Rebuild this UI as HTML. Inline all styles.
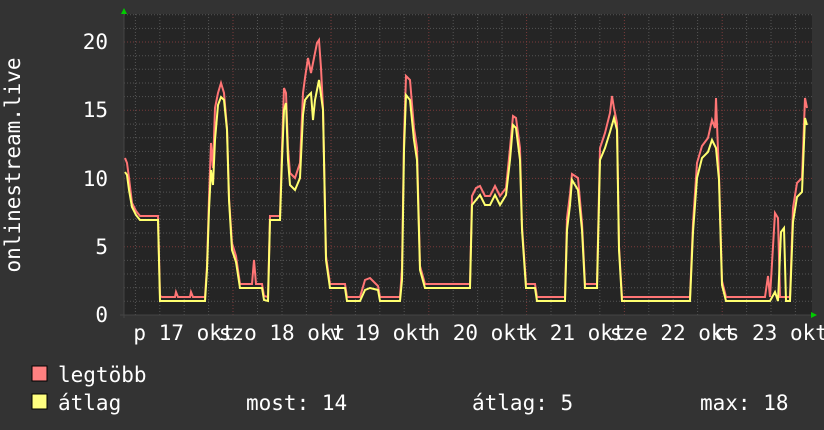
<!DOCTYPE html>
<html><head><meta charset="utf-8"><style>
html,body{margin:0;padding:0;background:#333;}
svg{display:block;}
text{font-family:"DejaVu Sans Mono","Liberation Mono",monospace;fill:#fff;font-size:21px;}
</style></head><body>
<svg width="824" height="430" viewBox="0 0 824 430" xmlns="http://www.w3.org/2000/svg">
<rect width="824" height="430" fill="#333"/>
<rect x="124" y="14" width="688" height="301" fill="#252525"/>
<g stroke="#555" stroke-width="1" stroke-dasharray="1,2">
<line x1="124" x2="812" y1="301.3" y2="301.3"/><line x1="124" x2="812" y1="287.7" y2="287.7"/><line x1="124" x2="812" y1="274" y2="274"/><line x1="124" x2="812" y1="260.4" y2="260.4"/>
<line x1="124" x2="812" y1="233" y2="233"/><line x1="124" x2="812" y1="219.4" y2="219.4"/><line x1="124" x2="812" y1="205.7" y2="205.7"/><line x1="124" x2="812" y1="192.1" y2="192.1"/>
<line x1="124" x2="812" y1="165" y2="165"/><line x1="124" x2="812" y1="151.4" y2="151.4"/><line x1="124" x2="812" y1="137.7" y2="137.7"/><line x1="124" x2="812" y1="124.1" y2="124.1"/>
<line x1="124" x2="812" y1="96.6" y2="96.6"/><line x1="124" x2="812" y1="83" y2="83"/><line x1="124" x2="812" y1="69.3" y2="69.3"/><line x1="124" x2="812" y1="55.7" y2="55.7"/>
<line x1="124" x2="812" y1="28.4" y2="28.4"/><line x1="124" x2="812" y1="14.7" y2="14.7"/>
<line y1="14" y2="315" x1="159.8" x2="159.8"/><line y1="14" y2="315" x1="184.2" x2="184.2"/><line y1="14" y2="315" x1="208.6" x2="208.6"/>
<line y1="14" y2="315" x1="257.5" x2="257.5"/><line y1="14" y2="315" x1="282" x2="282"/><line y1="14" y2="315" x1="306.4" x2="306.4"/>
<line y1="14" y2="315" x1="355.4" x2="355.4"/><line y1="14" y2="315" x1="379.8" x2="379.8"/><line y1="14" y2="315" x1="404.2" x2="404.2"/>
<line y1="14" y2="315" x1="453.2" x2="453.2"/><line y1="14" y2="315" x1="477.6" x2="477.6"/><line y1="14" y2="315" x1="502" x2="502"/>
<line y1="14" y2="315" x1="551" x2="551"/><line y1="14" y2="315" x1="575.4" x2="575.4"/><line y1="14" y2="315" x1="599.8" x2="599.8"/>
<line y1="14" y2="315" x1="648.8" x2="648.8"/><line y1="14" y2="315" x1="673.2" x2="673.2"/><line y1="14" y2="315" x1="697.6" x2="697.6"/>
<line y1="14" y2="315" x1="746.6" x2="746.6"/><line y1="14" y2="315" x1="771" x2="771"/><line y1="14" y2="315" x1="795.4" x2="795.4"/>
<line y1="14" y2="315" x1="135.4" x2="135.4"/>
</g>
<g stroke="#7a3a3a" stroke-width="1" stroke-dasharray="1,2">
<line x1="124" x2="812" y1="246.7" y2="246.7"/><line x1="124" x2="812" y1="178.4" y2="178.4"/><line x1="124" x2="812" y1="110.2" y2="110.2"/><line x1="124" x2="812" y1="42" y2="42"/>
<line y1="14" y2="315" x1="233" x2="233"/><line y1="14" y2="315" x1="331" x2="331"/><line y1="14" y2="315" x1="428.8" x2="428.8"/><line y1="14" y2="315" x1="526.6" x2="526.6"/><line y1="14" y2="315" x1="624.4" x2="624.4"/><line y1="14" y2="315" x1="722.2" x2="722.2"/>
</g>
<line x1="120" x2="814" y1="315" y2="315" stroke="#444" stroke-width="1"/>
<line x1="124" x2="124" y1="12" y2="318" stroke="#444" stroke-width="1"/>
<polygon points="121,14 127,14 124,8" fill="#0c0"/>
<polygon points="811,312 811,318 817,315" fill="#0c0"/>

<g fill="none" stroke-width="2" stroke-linejoin="miter">
<polyline stroke="#ff7575" transform="translate(0,-2)" points="125,160 127,165 129,180 132,205 136,213 140,218 155,218 158,218 160,298 162,299 175,299 176,294 178,299 190,299 191,294 193,299 205,299 207,268 209,200 211,145 213,170 215,110 218,95 221,85 224,95 227,130 229,200 232,245 236,258 240,286 252,286 254,262 256,286 262,286 264,298 268,299 270,218 280,218 282,150 284,90 286,95 288,150 290,175 295,180 300,165 303,95 305,80 308,60 311,75 313,65 315,55 317,45 319,42 321,70 323,110 326,258 330,286 345,286 347,299 360,299 365,282 370,280 378,288 380,299 400,299 402,270 404,140 406,78 410,82 414,130 417,150 420,268 425,286 470,286 472,198 476,190 480,188 485,198 490,198 495,188 500,198 506,190 510,150 513,118 516,120 520,150 522,228 526,286 535,286 537,299 565,299 567,220 570,196 572,176 578,180 582,225 585,286 597,286 600,150 605,135 610,115 612,98 614,110 617,125 619,248 622,299 690,299 693,225 697,165 702,148 708,140 712,122 715,130 716,100 719,178 722,283 726,299 765,299 768,278 770,299 775,215 778,220 780,299 786,299 790,299 793,210 797,185 802,180 805,100 807,110"/>
<polyline stroke="#ffff70" points="125,172 127,175 129,190 132,207 136,215 140,220 155,220 158,220 160,301 162,301 205,301 207,270 209,210 211,170 213,185 215,140 218,105 221,97 224,100 227,130 229,200 232,250 236,262 240,288 262,288 264,300 268,301 270,220 280,220 282,160 284,110 286,103 288,160 290,185 295,190 300,178 303,115 305,100 308,96 311,93 313,120 315,100 317,90 319,80 321,95 323,110 326,260 330,288 345,288 347,301 360,301 365,290 370,288 378,290 380,301 400,301 402,280 404,150 406,95 410,100 414,140 417,160 420,270 425,288 470,288 472,205 476,200 480,195 485,205 490,205 495,195 500,205 506,195 510,160 513,125 516,128 520,160 522,230 526,288 535,288 537,301 565,301 567,230 570,205 572,180 578,190 582,230 585,288 597,288 600,160 605,148 610,132 614,118 617,130 619,250 622,301 690,301 693,232 697,178 702,158 708,152 712,140 716,148 719,180 722,285 726,301 770,301 775,292 778,301 781,232 784,228 786,301 790,301 793,222 797,197 802,192 805,118 807,125"/>
</g>

<g text-anchor="end">
<text x="108" y="49">20</text>
<text x="108" y="117">15</text>
<text x="108" y="186">10</text>
<text x="108" y="254">5</text>
<text x="108" y="322">0</text>
</g>
<text transform="translate(20,165) rotate(-90)" text-anchor="middle">onlinestream.live</text>
<g text-anchor="middle">
<text x="184" y="340">p 17 okt</text>
<text x="282" y="340">szo 18 okt</text>
<text x="380" y="340">v 19 okt</text>
<text x="478" y="340">h 20 okt</text>
<text x="575" y="340">k 21 okt</text>
<text x="673" y="340">sze 22 okt</text>
<text x="771" y="340">cs 23 okt</text>
</g>
<rect x="32" y="366" width="15" height="15" fill="#ff8080" stroke="#000" stroke-width="1"/>
<rect x="32" y="394" width="15" height="15" fill="#ffff80" stroke="#000" stroke-width="1"/>
<text x="58" y="382">legtöbb</text>
<text x="58" y="410">átlag</text>
<text x="246" y="410">most: 14</text>
<text x="472" y="410">átlag: 5</text>
<text x="700" y="410">max: 18</text>
</svg>
</body></html>
